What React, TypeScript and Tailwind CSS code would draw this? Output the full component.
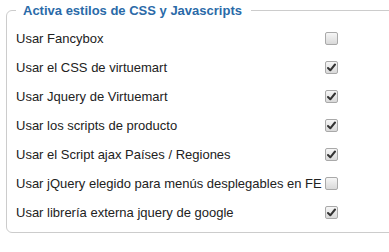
const options = [
  { label: "Usar Fancybox", checked: false },
  { label: "Usar el CSS de virtuemart", checked: true },
  { label: "Usar Jquery de Virtuemart", checked: true },
  { label: "Usar los scripts de producto", checked: true },
  { label: "Usar el Script ajax Países / Regiones", checked: true },
  { label: "Usar jQuery elegido para menús desplegables en FE", checked: false },
  { label: "Usar librería externa jquery de google", checked: true },
];

const Check = ({ checked }: { checked: boolean }) => (
  <span className="w-[13px] h-[13px] rounded-[2px] border border-[#a9a9a9] bg-gradient-to-b from-[#f6f6f6] to-[#d9d9d9] flex items-center justify-center">
    {checked && (
      <svg width="9" height="9" viewBox="0 0 9 9">
        <path d="M1 5 L3.3 7.3 L8 1.5" fill="none" stroke="#333" strokeWidth="2" strokeLinecap="round" strokeLinejoin="round" />
      </svg>
    )}
  </span>
);

export default function App() {
  return (
    <div className="w-[389px] h-[252px] overflow-hidden bg-white font-['Liberation_Sans',Arial,sans-serif]">
      <fieldset className="ml-[6px] mt-[3px] w-[420px] border border-[#cccccc] rounded-[6px] pl-[9px] pt-[6px] pb-[5px]">
        <legend className="pl-[7px] pr-[9px] text-[13px] leading-[15px] font-bold text-[#2a6aa8]">
          Activa estilos de CSS y Javascripts
        </legend>
        {options.map((o, i) => (
          <div key={i} className="flex items-center h-[29px] text-[13px] text-[#222]">
            <span className="w-[309px]">{o.label}</span>
            <Check checked={o.checked} />
          </div>
        ))}
      </fieldset>
    </div>
  );
}
